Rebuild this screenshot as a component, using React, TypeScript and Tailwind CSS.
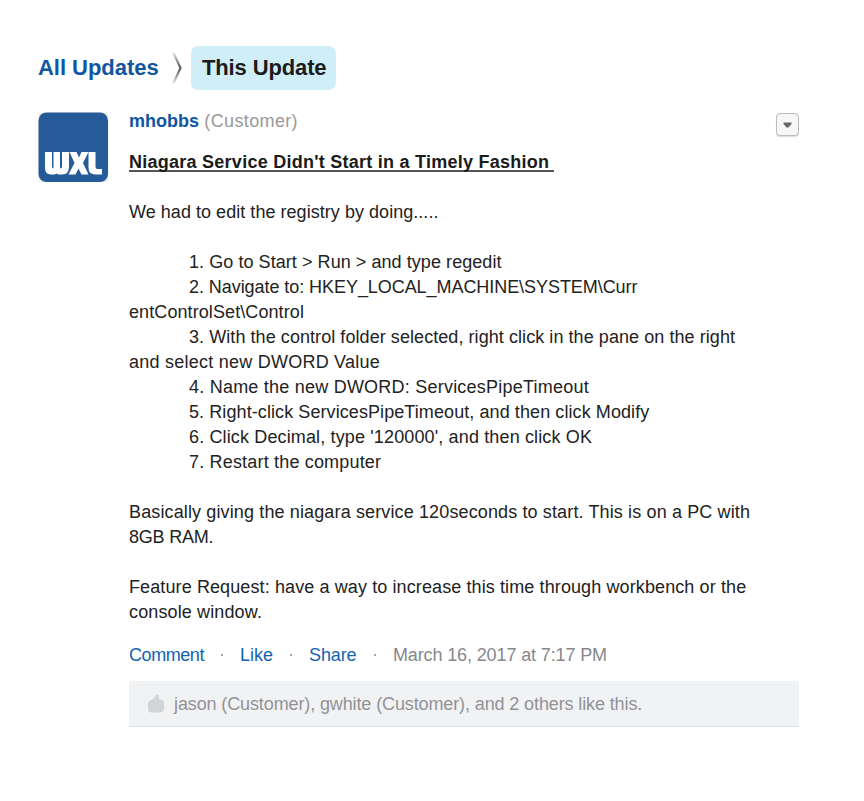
import React from 'react';

function Line({ children, className = '' }: { children?: React.ReactNode; className?: string }) {
  return <div className={`h-[25px] whitespace-pre leading-[27px] ${className}`}><span>{children}</span></div>;
}

function Dot({ className = '' }: { className?: string }) {
  return <span className={`h-[2px] w-[2px] bg-[#a5a5a9] ${className}`} />;
}

export default function App() {
  return (
    <main className="h-[801px] w-[864px] overflow-hidden bg-white pl-[38px] pt-[46px] font-['Liberation_Sans',Arial,sans-serif] text-[18px] leading-[25px] text-[#222]">
      <nav className="flex h-[44px] items-center text-[22px] font-bold">
        <a className="w-[134px] whitespace-nowrap pb-[2px] tracking-[-0.03px] text-[#0f56a3]">All Updates</a>
        <svg className="h-[32px] w-[10px]" viewBox="0 0 10 32" fill="none">
          <defs>
            <linearGradient id="chevron" x1="0" y1="0" x2="0" y2="1">
              <stop offset="0" stopColor="#ddd" />
              <stop offset=".5" stopColor="#555" />
              <stop offset="1" stopColor="#ddd" />
            </linearGradient>
          </defs>
          <path d="M1.5 1 8.500 16 1.500 31" stroke="url(#chevron)" strokeWidth="2.2" />
        </svg>
        <span className="ml-[9px] flex h-[44px] w-[145px] items-center whitespace-nowrap rounded-[7px] bg-[#d0eef8] pb-[2px] pl-[11px] tracking-[-0.13px] text-[#1b1b1b]">
          This Update
        </span>
      </nav>
      <article className="mt-[18px] flex">
        <div className="mt-[4px] h-[70px] w-[70px] shrink-0">
          <svg viewBox="0 0 70 70" className="h-[70px] w-[70px]">
            <rect x=".5" y=".5" width="69.500" height="69.500" fill="#f1efe8" />
            <rect x=".5" y=".5" width="69.500" height="69.500" rx="8" fill="#265b99" />
            <g fill="#fff">
              <path d="M7 40H14V54.500Q14 56.500 15.500 56.500V40H22V56.500Q24 56.500 24 54.500V40H31V55Q31 62.500 24 62.500H21Q19.500 62.500 18.500 61.500Q17.500 62.500 16 62.500H13Q7 62.500 7 56Z" />
              <path d="M31.500 40H38.500L41 45.500 43.500 40H50.500L45 51 50.500 62.500H43.500L40.500 56.500 37.500 62.500H30.500L36.500 51Z" />
              <path d="M50.500 40H57.500V54.500Q57.500 57 59.500 57H64V62.500H57.500Q50.500 62.500 50.500 55.500Z" />
            </g>
          </svg>
        </div>
        <div className="ml-[21px] w-[670px]">
          <header className="flex h-[41px] justify-between">
            <div className="whitespace-pre leading-[27px]"><b className="text-[#0f56a3]">mhobbs</b><span className="tracking-[0.36px] text-[#999]"> (Customer)</span></div>
            <button className="mt-[5px] flex h-[23px] w-[23px] items-center justify-center rounded-[4px] border border-[#bcbcbc] bg-[#f6f6f6] shadow-[0_1px_1px_#ddd]">
              <svg width="9" height="6" viewBox="0 0 9 6"><path d="M.5 .5H8.500V2L5.500 5.500H3.500L.5 2Z" fill="#666" /></svg>
            </button>
          </header>
          <h1 className="flex h-[50px] font-bold text-[#1b1b1b]">
            <span className="h-[23px] w-[425px] whitespace-nowrap border-b-2 border-[#555] leading-[27px] tracking-[0.255px]">Niagara Service Didn't Start in a Timely Fashion</span>
          </h1>
          <section>
            <Line className="tracking-[0.04px]">We had to edit the registry by doing.....</Line>
            <Line />
            <Line className="pl-[60px] tracking-[0.06px]">1. Go to Start &gt; Run &gt; and type regedit</Line>
            <Line className="pl-[60px] tracking-[-0.06px]">2. Navigate to: HKEY_LOCAL_MACHINE\SYSTEM\Curr</Line>
            <Line className="tracking-[0.09px]">entControlSet\Control</Line>
            <Line className="pl-[60px] tracking-[0.065px]">3. With the control folder selected, right click in the pane on the right</Line>
            <Line className="tracking-[0.24px]">and select new DWORD Value</Line>
            <Line className="pl-[60px] tracking-[0.225px]">4. Name the new DWORD: ServicesPipeTimeout</Line>
            <Line className="pl-[60px] tracking-[0.085px]">5. Right-click ServicesPipeTimeout, and then click Modify</Line>
            <Line className="pl-[60px] tracking-[0.14px]">6. Click Decimal, type '120000', and then click OK</Line>
            <Line className="pl-[60px] tracking-[0.18px]">7. Restart the computer</Line>
            <Line />
            <Line className="tracking-[0.13px]">Basically giving the niagara service 120seconds to start. This is on a PC with</Line>
            <Line className="tracking-[-0.2px]">8GB RAM.</Line>
            <Line />
            <Line className="tracking-[0.107px]">Feature Request: have a way to increase this time through workbench or the</Line>
            <Line className="tracking-[0.13px]">console window.</Line>
          </section>
          <div className="mt-[18px] flex h-[25px] items-center whitespace-nowrap leading-[27px] text-[#1264b0]">
            <a className="w-[92px] pt-[2px] tracking-[-0.43px]">Comment</a><Dot />
            <a className="ml-[17px] w-[50px] pt-[2px]">Like</a><Dot />
            <a className="ml-[17px] w-[65px] pt-[2px] tracking-[-0.1px]">Share</a><Dot />
            <span className="ml-[17px] pt-[2px] tracking-[-0.13px] text-[#88888c]">March 16, 2017 at 7:17 PM</span>
          </div>
          <footer className="mt-[14px] flex h-[46px] items-center border-b border-[#dce1e8] bg-[#f1f2f4] pl-[19px] text-[#929294]">
            <svg className="mr-[10px] h-[19px] w-[16px]" viewBox="0 0 16 19" fill="#d2d5d7">
              <path d="M0 9.500Q0 7.500 2 6.500L5 5Q7 3.500 8 1Q9.500-.5 10.500 1Q11.500 3 10.500 5.500H13Q16 6 16 9V14Q16 18.500 12 18.500H4Q0 18.500 0 15.500Z" />
            </svg>
            <span className="whitespace-nowrap pt-[2px] tracking-[-0.117px]">jason (Customer), gwhite (Customer), and 2 others like this.</span>
          </footer>
        </div>
      </article>
    </main>
  );
}
